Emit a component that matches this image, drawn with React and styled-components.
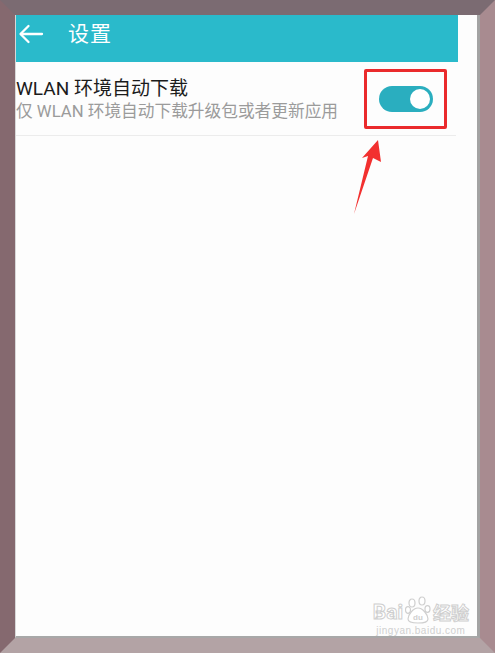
import React from "react"
import styled, { createGlobalStyle } from "styled-components"

const GlobalStyle = createGlobalStyle`
  html, body {
    margin: 0;
    padding: 0;
    background: #8a7478;
  }
  * {
    box-sizing: border-box;
  }
`

const Frame = styled.div`
  position: relative;
  width: 495px;
  height: 653px;
  border-style: solid;
  border-width: 15px 15px 15px 15px;
  border-color: #7b6b72 #a88b90 #b3a3a5 #85696f;
  font-family: "Roboto", "Noto Sans CJK SC", sans-serif;
`

const Screen = styled.div`
  position: relative;
  height: 100%;
  background: #fdfdfd;
  border-left: 1px solid #d8d8d8;
  border-right: 3px solid #a3a3a3;
  border-bottom: 2px solid #a8a8a8;
  overflow: hidden;
`

const Phone = styled.div`
  width: 442px;
  display: flex;
  flex-direction: column;
`

const Header = styled.header`
  height: 47px;
  background: #2abacb;
  display: flex;
  align-items: center;
  padding-left: 2px;
  padding-bottom: 9px;
  gap: 24px;
  color: #fff;
`

const Title = styled.h1`
  margin: 0;
  font-size: 21px;
  font-weight: 400;
  line-height: 1;
  letter-spacing: 1px;
`

const Row = styled.div`
  display: flex;
  align-items: center;
  justify-content: space-between;
  padding: 6px 10px 6px 0;
  border-bottom: 1px solid #ececec;
  margin-right: 2px;
  height: 74px;
`

const Texts = styled.div`
  display: flex;
  flex-direction: column;
  gap: 2px;
  padding-top: 1px;
`

const RowTitle = styled.div`
  font-size: 19px;
  color: #1b1b1b;
  line-height: 23px;
`

const RowSub = styled.div`
  font-size: 16.7px;
  color: #9b9b9b;
  line-height: 20px;
`

const Highlight = styled.div`
  width: 83px;
  height: 60px;
  border: 3px solid #ea2a2c;
  border-radius: 2px;
  display: flex;
  align-items: center;
  justify-content: center;
  margin-top: 1px;
  margin-right: -1px;
`

const Switch = styled.div`
  width: 54px;
  height: 26px;
  border-radius: 13px;
  background: ${(p) => (p.on ? "#2aaebf" : "#ccc")};
  display: flex;
  align-items: center;
  justify-content: ${(p) => (p.on ? "flex-end" : "flex-start")};
  padding: 0 3px;
`

const Knob = styled.div`
  width: 20px;
  height: 20px;
  border-radius: 50%;
  background: #fff;
`

const Pointer = styled.svg`
  position: absolute;
  left: 324px;
  top: 115px;
`

const Watermark = styled.div`
  position: absolute;
  right: 8px;
  bottom: 0;
  display: flex;
  flex-direction: column;
  align-items: center;
  color: #d4d4d4;
`

const MarkTop = styled.div`
  display: flex;
  align-items: flex-end;
  gap: 2px;
  font-size: 21px;
  font-weight: 700;
  line-height: 1.15;
  color: #fff;
  -webkit-text-stroke: 1px #cfcfcf;
`

const MarkCn = styled.span`
  font-family: "Noto Sans CJK SC", sans-serif;
  font-size: 18px;
  line-height: 1.2;
`

const MarkUrl = styled.div`
  font-size: 10px;
  line-height: 11px;
  letter-spacing: 0.5px;
  color: #d0d0d0;
  margin-top: 1px;
  font-family: "Liberation Sans", sans-serif;
`

const BackIcon = () => (
  <svg width="26" height="20" viewBox="0 0 26 20" fill="none" stroke="#fff" strokeWidth="2.3" strokeLinecap="round" strokeLinejoin="round">
    <path d="M24 10H3" />
    <path d="M10.5 2L2.5 10l8 8" />
  </svg>
)

const Paw = () => (
  <svg width="26" height="28" viewBox="0 0 26 28" fill="#fff" stroke="#cfcfcf" strokeWidth="1.2">
    <ellipse cx="7" cy="7" rx="3" ry="4" />
    <ellipse cx="17" cy="5" rx="3" ry="4" />
    <ellipse cx="3" cy="14" rx="2.5" ry="3.4" />
    <ellipse cx="22.5" cy="13" rx="2.5" ry="3.4" />
    <path d="M13 12c-5 0-10 7-10 11 0 3 3 4 10 4s10-1 10-4c0-4-5-11-10-11z" />
    <text x="13" y="24" fontSize="8" textAnchor="middle" fill="#cfcfcf" stroke="none" fontFamily="Liberation Sans, sans-serif" fontWeight="700">du</text>
  </svg>
)

const App = () => {
  return (
    <>
      <GlobalStyle />
      <Frame>
        <Screen>
          <Phone>
            <Header>
              <BackIcon />
              <Title>设置</Title>
            </Header>
            <Row>
              <Texts>
                <RowTitle>WLAN 环境自动下载</RowTitle>
                <RowSub>仅 WLAN 环境自动下载升级包或者更新应用</RowSub>
              </Texts>
              <Highlight>
                <Switch on>
                  <Knob />
                </Switch>
              </Highlight>
            </Row>
          </Phone>
          <Pointer width="50" height="90" viewBox="0 0 50 90">
            <polygon points="38,10 22,28 28,26 14,84 33,28 41,32" fill="#f2302f" />
          </Pointer>
          <Watermark>
            <MarkTop>
              <span>Bai</span>
              <Paw />
              <MarkCn>经验</MarkCn>
            </MarkTop>
            <MarkUrl>jingyan.baidu.com</MarkUrl>
          </Watermark>
        </Screen>
      </Frame>
    </>
  )
}

export default App
